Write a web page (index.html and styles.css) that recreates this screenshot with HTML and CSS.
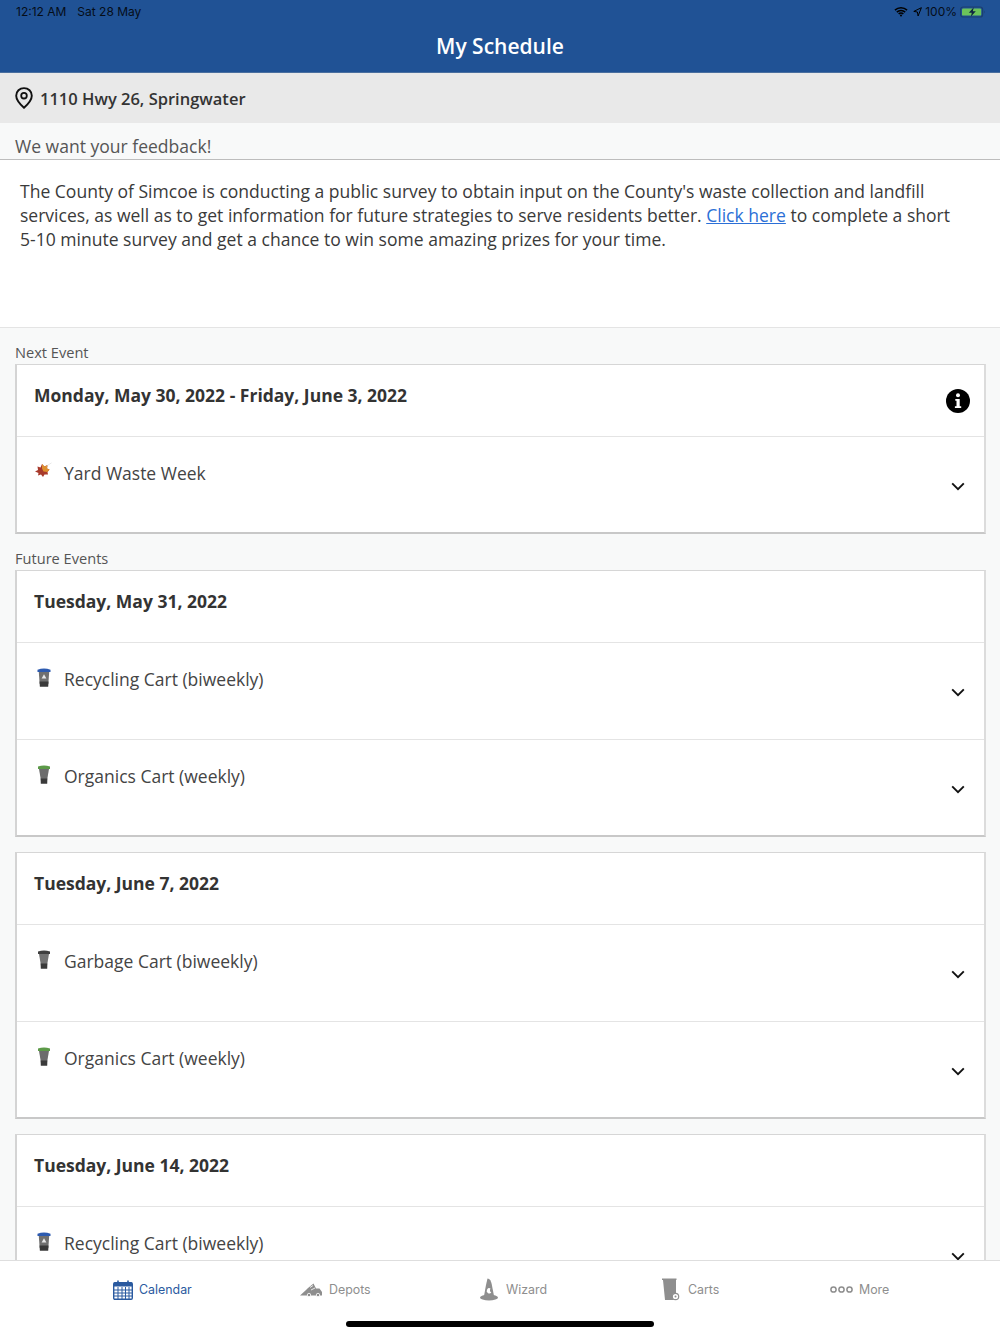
FILE: index.html
```html
<!DOCTYPE html>
<html lang="en">
<head>
    <meta charset="UTF-8">
    <meta name="viewport" content="width=device-width, initial-scale=1.0">
    <title>My Schedule</title>
    <link rel="stylesheet" href="styles.css">
</head>
<body>
    <svg class="sprites" width="0" height="0">
        <symbol id="chevron" viewBox="0 0 14 9"><path d="M1.200 1.400 7 7.200l5.800-5.800" fill="none" stroke="#111" stroke-width="1.900"/></symbol>
        <symbol id="leaf" viewBox="0 0 18 18">
            <path d="M0 9.500 3 8 2.500 4.500l3 1L7 2l2.500 2.500 3-1.500-.5 3.500 2.500 1-2 2.500.5 2.500H9.500L8 15l-2-2.500-3 1 .5-2.500z" fill="#a83a2c"/>
            <path d="M7 2l2.500 2.500 3-1.500-.5 3.500 2.500 1-2 2.500-4-.5-1.500-3z" fill="#de8f2e"/>
            <path d="M11.500 4 16.500.9" stroke="#d8d8d8" stroke-width=".6" fill="none"/>
        </symbol>
        <symbol id="cart-recycling" viewBox="0 0 14 19">
            <path d="M.5 1.800Q7-.6 13.500 1.800V4H.5z" fill="#2d5bb0"/>
            <path d="M1.800 4h10.400l-.9 12H2.700z" fill="#707070"/>
            <path d="M7 6.300 9.400 10.600H4.600z" fill="#e8e8e8"/>
            <path d="M2.500 13.500h9l-.3 5.200H2.900z" fill="#3a3a3a"/>
        </symbol>
        <symbol id="cart-organics" viewBox="0 0 14 19">
            <path d="M1 1.400Q7-.2 13 1.400V4H1z" fill="#5c9a48"/>
            <path d="M2 4h10l-1.800 10.500H3.800z" fill="#6c6c6c"/>
            <path d="M3.600 13.500h6.800l-.2 5.200H3.800z" fill="#3a3a3a"/>
        </symbol>
        <symbol id="cart-garbage" viewBox="0 0 14 19">
            <path d="M1 1.400Q7-.2 13 1.400V4H1z" fill="#3f3f3f"/>
            <path d="M2 4h10l-1.800 10.500H3.800z" fill="#737373"/>
            <path d="M3.600 13.500h6.800l-.2 5.200H3.800z" fill="#3a3a3a"/>
        </symbol>
    </svg>

    <header class="top-bar">
        <div class="status-bar">
            <span class="status-time">12:12 AM</span>
            <span>Sat 28 May</span>
            <span class="status-right">
                <svg width="14" height="11" viewBox="0 0 15 11"><path d="M1 4a9.400 9.400 0 0 1 13 0M3 6.200a6.400 6.400 0 0 1 9 0M5 8.300a3.400 3.400 0 0 1 5 0" fill="none" stroke="#000" stroke-width="1.600"/><circle cx="7.500" cy="9.800" r="1.100"/></svg>
                <svg class="status-arrow" width="9" height="10" viewBox="0 0 9 10"><path d="M8.400.7 .8 4.400l3.600.6.700 4z" fill="none" stroke="#000" stroke-width="1"/></svg>
                <span>100%</span>
                <svg width="26" height="12" viewBox="0 0 26 12"><rect x=".6" y="1" width="22" height="10" rx="2.600" fill="none" stroke="#1c3f70" stroke-width="1.200"/><rect x="2" y="2.400" width="19.200" height="7.200" rx="1.200" fill="#6cc35a"/><path d="M13.800 1.200 8.800 6.800h3l-1 4 5-5.600h-3z" fill="#0d2440"/><path d="M24.200 4.600c.8.300.8 2.500 0 2.800z" fill="#1c3f70"/></svg>
            </span>
        </div>
        <h1>My Schedule</h1>
    </header>

    <div class="address-bar">
        <svg width="18" height="22" viewBox="0 0 18 22"><path d="M9 1.100c4.400 0 7.800 3.300 7.800 7.600 0 4.600-4 8.600-7.800 12-3.800-3.400-7.800-7.400-7.800-12C1.200 4.400 4.600 1.100 9 1.100z" fill="none" stroke="#111" stroke-width="1.900"/><circle cx="9" cy="8.700" r="2.800" fill="none" stroke="#111" stroke-width="1.800"/></svg>
        <span>1110 Hwy 26, Springwater</span>
    </div>

    <main class="content">
        <div class="notice-title">We want your feedback!</div>
        <div class="notice">
            The County of Simcoe is conducting a public survey to obtain input on the County's waste collection and landfill services, as well as to get information for future strategies to serve residents better. <a href="#">Click here</a> to complete a short 5-10 minute survey and get a chance to win some amazing prizes for your time.
        </div>

        <div class="events">
            <div class="section-label">Next Event</div>
            <section class="card">
                <div class="card-head">
                    <span>Monday, May 30, 2022 - Friday, June 3, 2022</span>
                    <svg class="info" width="24" height="24" viewBox="0 0 24 24"><circle cx="12" cy="12" r="12" fill="#000"/><circle cx="12" cy="6.300" r="2" fill="#fff"/><path d="M9.300 10h4.400v7.300h1.500V19H8.900v-1.700h1.600v-5.600H9.300z" fill="#fff"/></svg>
                </div>
                <div class="row">
                    <svg class="row-icon leaf-icon" width="18" height="18"><use href="#leaf"/></svg>
                    <span class="row-text">Yard Waste Week</span>
                    <svg class="chevron" width="14" height="9"><use href="#chevron"/></svg>
                </div>
            </section>

            <div class="section-label">Future Events</div>
            <section class="card">
                <div class="card-head"><span>Tuesday, May 31, 2022</span></div>
                <div class="row">
                    <svg class="row-icon" width="14" height="19"><use href="#cart-recycling"/></svg>
                    <span class="row-text">Recycling Cart (biweekly)</span>
                    <svg class="chevron" width="14" height="9"><use href="#chevron"/></svg>
                </div>
                <div class="row">
                    <svg class="row-icon" width="14" height="19"><use href="#cart-organics"/></svg>
                    <span class="row-text">Organics Cart (weekly)</span>
                    <svg class="chevron" width="14" height="9"><use href="#chevron"/></svg>
                </div>
            </section>

            <section class="card">
                <div class="card-head"><span>Tuesday, June 7, 2022</span></div>
                <div class="row">
                    <svg class="row-icon" width="14" height="19"><use href="#cart-garbage"/></svg>
                    <span class="row-text">Garbage Cart (biweekly)</span>
                    <svg class="chevron" width="14" height="9"><use href="#chevron"/></svg>
                </div>
                <div class="row">
                    <svg class="row-icon" width="14" height="19"><use href="#cart-organics"/></svg>
                    <span class="row-text">Organics Cart (weekly)</span>
                    <svg class="chevron" width="14" height="9"><use href="#chevron"/></svg>
                </div>
            </section>

            <section class="card">
                <div class="card-head"><span>Tuesday, June 14, 2022</span></div>
                <div class="row">
                    <svg class="row-icon" width="14" height="19"><use href="#cart-recycling"/></svg>
                    <span class="row-text">Recycling Cart (biweekly)</span>
                    <svg class="chevron" width="14" height="9"><use href="#chevron"/></svg>
                </div>
            </section>
        </div>
    </main>

    <nav class="tab-bar">
        <a class="tab active" href="#">
            <svg width="20" height="20" viewBox="0 0 20 20"><rect x=".7" y="2.700" width="18.600" height="16.600" rx="1.200" fill="none" stroke="#2a5aa0" stroke-width="1.400"/><rect x="1" y="2.500" width="18" height="4" fill="#2a5aa0"/><path d="M5 .5v3.500M15 .5v3.500" stroke="#2a5aa0" stroke-width="1.600"/><path d="M1 10h18M1 13h18M1 16h18M5 7v12M9 7v12M12.500 7v12M16 7v12" stroke="#2a5aa0" stroke-width="1"/></svg>
            <span>Calendar</span>
        </a>
        <a class="tab" href="#">
            <svg width="23" height="14" viewBox="0 0 23 14"><path d="M0 12.500 6 7l2-2 5.500-4.500 2.500 5h3.500l2.500 3.500v3.500H0z" fill="#8e8e8e"/><path d="M10 4.500l3-2M11 7l4-2" stroke="#fff" stroke-width=".8"/><circle cx="9" cy="12" r="1.700" fill="#8e8e8e" stroke="#fff" stroke-width=".8"/><circle cx="18" cy="12" r="1.700" fill="#8e8e8e" stroke="#fff" stroke-width=".8"/></svg>
            <span>Depots</span>
        </a>
        <a class="tab tab-narrow" href="#">
            <svg width="18" height="23" viewBox="0 0 18 23"><path d="M7.500.5c2.500.3 3.500 2.500 4.200 5.500l2.300 12H4L6 7z" fill="#8e8e8e"/><ellipse cx="9" cy="19.500" rx="9" ry="3" fill="#8e8e8e"/><path d="M10.500 10.500a2.600 2.600 0 1 0 .8 4 3 3 0 0 1-.8-4z" fill="#fff"/></svg>
            <span>Wizard</span>
        </a>
        <a class="tab tab-narrow" href="#">
            <svg width="18" height="23" viewBox="0 0 18 23"><path d="M0 .5h14.500v1.500H0z" fill="#8e8e8e"/><path d="M1 2h13v14.500a5 5 0 0 0-2 5.500H3z" fill="#8e8e8e"/><circle cx="13.500" cy="18.500" r="3.200" fill="#fff" stroke="#8e8e8e" stroke-width="1.200"/><circle cx="13.500" cy="18.500" r="1" fill="#8e8e8e"/></svg>
            <span>Carts</span>
        </a>
        <a class="tab" href="#">
            <svg width="23" height="7" viewBox="0 0 23 7"><circle cx="3.500" cy="3.500" r="2.600" fill="none" stroke="#8e8e8e" stroke-width="1.500"/><circle cx="11.500" cy="3.500" r="2.600" fill="none" stroke="#8e8e8e" stroke-width="1.500"/><circle cx="19.500" cy="3.500" r="2.600" fill="none" stroke="#8e8e8e" stroke-width="1.500"/></svg>
            <span>More</span>
        </a>
        <div class="home-indicator"></div>
    </nav>
</body>
</html>
```

FILE: styles.css
```css
* {
    box-sizing: border-box;
}

body {
    font-family: "Open Sans", sans-serif;
    margin: 0;
    padding: 0;
    height: 1334px;
    display: flex;
    flex-direction: column;
    overflow: hidden;
    background-color: #f8f9f9;
    color: #333;
}

.sprites {
    position: absolute;
}

/* Top bar */
.top-bar {
    flex: none;
    height: 73px;
    background-color: #205295;
    border-bottom: 1px solid #4a6f9f;
}

.status-bar {
    display: flex;
    align-items: center;
    height: 23px;
    padding: 0 14px 0 16px;
    font-family: Inter, sans-serif;
    font-size: 12px;
    color: #050d18;
}

.status-time {
    margin-right: 11px;
}

.status-right {
    margin-left: auto;
    display: flex;
    align-items: center;
    gap: 3px;
}

.status-arrow {
    margin-left: 2px;
}

.top-bar h1 {
    margin: 0;
    padding-top: 8px;
    font-size: 21px;
    font-weight: 600;
    line-height: 30px;
    text-align: center;
    color: #fff;
}

/* Address */
.address-bar {
    flex: none;
    display: flex;
    align-items: center;
    gap: 7px;
    height: 50px;
    padding-left: 15px;
    background-color: #e9e9e9;
    font-size: 16.500px;
    font-weight: 600;
}

/* Notice */
.content {
    flex: 1;
    min-height: 0;
    overflow: hidden;
}

.notice-title {
    height: 37px;
    padding: 11px 0 0 15px;
    font-size: 17.550px;
    line-height: 25px;
    color: #555;
    border-bottom: 1px solid #bdbdbd;
}

.notice {
    height: 168px;
    padding: 19px 40px 0 20px;
    background-color: #fff;
    border-bottom: 1px solid #e4e4e4;
    font-size: 17.550px;
    line-height: 24px;
    color: #3a3a3a;
}

.notice a {
    color: #2b6fd6;
}

/* Events */
.events {
    padding: 15px 14px 0 15px;
}

.section-label {
    padding-bottom: 2px;
    font-size: 14.600px;
    line-height: 19px;
    color: #555;
}

.card {
    background-color: #fff;
    border-style: solid;
    border-width: 1px 2px 2px 2px;
    border-color: #d6d6d6 #dcdcdc #c8c8c8 #d4d4d4;
    margin-bottom: 15px;
}

.card-head {
    display: flex;
    justify-content: space-between;
    height: 71px;
    padding: 18px 14px 0 17px;
    font-size: 17.500px;
    font-weight: 700;
    line-height: 25px;
}

.info {
    margin-top: 6px;
}

.row {
    display: flex;
    align-items: flex-start;
    height: 97px;
    padding: 24px 19px 0 20px;
    border-top: 1px solid #e4e4e4;
    font-size: 17.500px;
    line-height: 24px;
    color: #444;
}

.row:last-child {
    height: 96px;
}

.row-icon {
    flex: none;
    margin-top: 1px;
    margin-right: 13px;
}

.leaf-icon {
    margin: 1px 11px 0 -2px;
}

.row-text {
    flex: 1;
}

.chevron {
    flex: none;
    margin-top: 21px;
}

/* Tab bar */
.tab-bar {
    flex: none;
    position: relative;
    height: 74px;
    display: grid;
    grid-template-columns: 187px 180px 182px 168px auto;
    align-items: start;
    padding: 17px 0 0 113px;
    background-color: #fff;
    border-top: 1px solid #dedede;
}

.tab {
    display: flex;
    align-items: center;
    gap: 6px;
    height: 23px;
    font-family: Inter, sans-serif;
    font-size: 12.400px;
    color: #8e8e8e;
    text-decoration: none;
}

.tab-narrow {
    gap: 8px;
}

.tab.active {
    color: #2a5aa0;
}

.home-indicator {
    position: absolute;
    left: 346px;
    bottom: 7px;
    width: 308px;
    height: 6px;
    border-radius: 3px;
    background-color: #000;
}
```
